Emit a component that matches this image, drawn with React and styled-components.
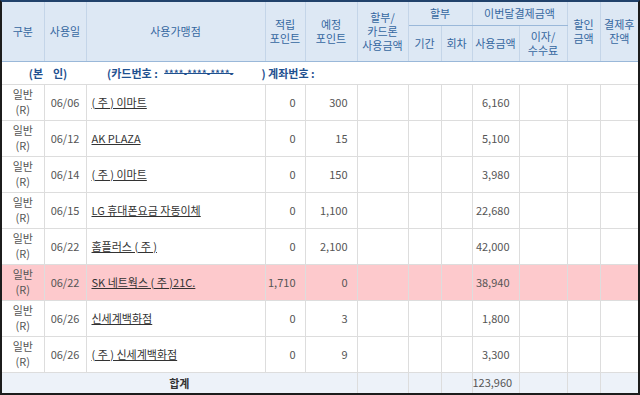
import React from "react";
import styled, { createGlobalStyle } from "styled-components";

const rows = [
  { date: "06/06", shop: "( 주 ) 이마트", save: "0", plan: "300", amount: "6,160" },
  { date: "06/12", shop: "AK PLAZA", save: "0", plan: "15", amount: "5,100" },
  { date: "06/14", shop: "( 주 ) 이마트", save: "0", plan: "150", amount: "3,980" },
  { date: "06/15", shop: "LG 휴대폰요금 자동이체", save: "0", plan: "1,100", amount: "22,680" },
  { date: "06/22", shop: "홈플러스 ( 주 )", save: "0", plan: "2,100", amount: "42,000" },
  { date: "06/22", shop: "SK 네트웍스 ( 주 )21C.", save: "1,710", plan: "0", amount: "38,940", hot: true },
  { date: "06/26", shop: "신세계백화점", save: "0", plan: "3", amount: "1,800" },
  { date: "06/26", shop: "( 주 ) 신세계백화점", save: "0", plan: "9", amount: "3,300" },
];

const widths = [42, 42, 179, 40, 52, 51, 33, 31, 47, 48, 33, 38];

function App() {
  return (
    <>
      <GlobalStyle />
      <Frame>
        <Table>
          <colgroup>
            {widths.map((w, i) => (
              <col key={i} style={{ width: w }} />
            ))}
          </colgroup>
          <thead>
            <HeadRow $h={23}>
              <Th rowSpan={2}>구분</Th>
              <Th rowSpan={2}>사용일</Th>
              <Th rowSpan={2}>사용가맹점</Th>
              <Th rowSpan={2}>
                적립
                <br />
                포인트
              </Th>
              <Th rowSpan={2}>
                예정
                <br />
                포인트
              </Th>
              <Th rowSpan={2}>
                할부/
                <br />
                카드론
                <br />
                사용금액
              </Th>
              <Th colSpan={2}>할부</Th>
              <Th colSpan={2}>이번달결제금액</Th>
              <Th rowSpan={2}>
                할인
                <br />
                금액
              </Th>
              <Th rowSpan={2}>
                결제후
                <br />
                잔액
              </Th>
            </HeadRow>
            <HeadRow $h={36}>
              <Th>기간</Th>
              <Th>회차</Th>
              <Th>사용금액</Th>
              <Th>
                이자/
                <br />
                수수료
              </Th>
            </HeadRow>
          </thead>
          <tbody>
            <OwnerRow>
              <OwnerCell colSpan={2} $center>
                (본&nbsp;&nbsp;&nbsp;&nbsp;인)
              </OwnerCell>
              <OwnerCell colSpan={10}>
                (카드번호 : <Masked>****-****-****-</Masked>
                <Gap />) 계좌번호 :
              </OwnerCell>
            </OwnerRow>
            {rows.map((r, i) => (
              <DataRow key={i} $hot={r.hot}>
                <Td $align="center">
                  일반
                  <br />
                  (R)
                </Td>
                <Td $align="center">{r.date}</Td>
                <Td $align="left">
                  <Shop>{r.shop}</Shop>
                </Td>
                <Td $align="right">{r.save}</Td>
                <Td $align="right">{r.plan}</Td>
                <Td />
                <Td />
                <Td />
                <Td $align="right">{r.amount}</Td>
                <Td />
                <Td />
                <Td />
              </DataRow>
            ))}
            <TotalRow>
              <TotalLabel colSpan={5}>합계</TotalLabel>
              <Td />
              <Td />
              <Td />
              <Td $align="right">123,960</Td>
              <Td />
              <Td />
              <Td />
            </TotalRow>
          </tbody>
        </Table>
      </Frame>
    </>
  );
}

export default App;

const GlobalStyle = createGlobalStyle`
  body {
    margin: 0;
    background: #fff;
    font-family: "Noto Sans CJK KR", "Liberation Sans", sans-serif;
  }
`;

const Frame = styled.div`
  width: 640px;
  height: 395px;
  box-sizing: border-box;
  border: 2px solid #1c1c1c;
  border-top-color: #21426b;
  overflow: hidden;
`;

const Table = styled.table`
  width: 636px;
  table-layout: fixed;
  border-collapse: collapse;
  font-size: 11px;
  color: #555;
`;

const HeadRow = styled.tr`
  height: ${(p) => p.$h}px;
`;

const Th = styled.th`
  background: #dde8f4;
  color: #3567a0;
  font-weight: 400;
  font-size: 11px;
  line-height: 14px;
  padding: 0;
  text-align: center;
  vertical-align: middle;
  border: 1px solid #c4d5e8;
  border-top: none;
  border-bottom: 1px solid #9ab8d9;
  &:first-child {
    border-left: none;
  }
  &:last-child {
    border-right: none;
  }
`;

const OwnerRow = styled.tr`
  height: 23px;
`;

const OwnerCell = styled.td`
  padding: 0 0 0 ${(p) => (p.$center ? 8 : 21)}px;
  text-align: ${(p) => (p.$center ? "center" : "left")};
  color: #1f5190;
  font-weight: 700;
  font-size: 11px;
  white-space: nowrap;
  border-bottom: 1px solid #dcdcdc;
`;

const Masked = styled.span`
  font-size: 9px;
  letter-spacing: 0.3px;
  margin-left: 4px;
  vertical-align: 1px;
  text-decoration: line-through;
`;

const Gap = styled.span`
  display: inline-block;
  width: 28px;
`;

const DataRow = styled.tr`
  height: 36px;
  background: ${(p) => (p.$hot ? "#fdc9cc" : "#fff")};
`;

const Td = styled.td`
  padding: 0 ${(p) => (p.$align === "right" ? 9 : 0)}px 0
    ${(p) => (p.$align === "left" ? 5 : 0)}px;
  text-align: ${(p) => p.$align || "center"};
  line-height: 15px;
  white-space: nowrap;
  overflow: hidden;
  border: 1px solid #dddddd;
  &:first-child {
    border-left: none;
  }
  &:last-child {
    border-right: none;
  }
`;

const Shop = styled.span`
  color: #333;
  text-decoration: underline;
`;

const TotalRow = styled.tr`
  height: 21px;
  background: #edf2f9;
`;

const TotalLabel = styled.td`
  text-align: center;
  font-weight: 700;
  color: #333;
  padding: 0;
  border-top: 1px solid #dddddd;
`;
